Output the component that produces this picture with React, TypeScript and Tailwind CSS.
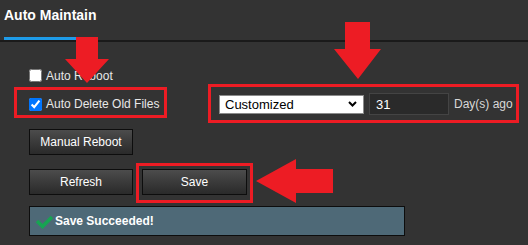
import React from "react";

function Btn({ children, className = "" }: { children: React.ReactNode; className?: string }) {
  return (
    <div
      className={
        "h-[26px] flex items-center justify-center border border-[#0d0d0d] bg-gradient-to-b from-[#4c4c4c] to-[#2a2a2a] text-white text-[12px] leading-none " +
        className
      }
    >
      {children}
    </div>
  );
}

export default function App() {
  return (
    <div className="relative w-[528px] h-[245px] overflow-hidden bg-[#333333] font-['Liberation_Sans',Arial,sans-serif]">
      {/* header */}
      <div className="h-[42px] border-b-2 border-[#1a1a1a] pl-[4px]">
        <div className="inline-flex flex-col pt-[7px]">
          <span className="text-[14px] leading-[16px] font-bold text-white">Auto Maintain</span>
          <div className="mt-[14px] h-[3px] bg-[#1e9be8]" />
        </div>
      </div>

      {/* content */}
      <div className="pl-[29px] pt-[27px] flex flex-col">
        <label className="flex items-center h-[13px] gap-[4px] text-[12px] leading-[14px] text-[#e8e8e8]">
          <input type="checkbox" className="m-0 w-[13px] h-[13px]" readOnly />
          <span>Auto Reboot</span>
        </label>

        <div className="mt-[11px] flex items-center h-[22px]">
          <label className="w-[190px] flex items-center gap-[4px] text-[12px] leading-[14px] text-[#e8e8e8]">
            <input type="checkbox" className="m-0 w-[13px] h-[13px]" checked readOnly />
            <span>Auto Delete Old Files</span>
          </label>
          <div className="flex items-center">
            <div className="w-[145px] h-[19px] bg-white border border-[#8a8a8a] flex items-center justify-between pl-[5px] pr-[6px] text-[13px] text-black leading-none">
              <span>Customized</span>
              <svg width="9" height="6" viewBox="0 0 9 6">
                <path d="M1 1 L4.5 4.5 L8 1" fill="none" stroke="#000" strokeWidth="2" />
              </svg>
            </div>
            <div className="ml-[5px] w-[80px] h-[22px] bg-[#2a2a2a] border border-[#444444] flex items-center pl-[6px] text-[13px] text-white leading-none">
              31
            </div>
            <span className="ml-[5px] text-[12px] text-[#d8d8d8] leading-none">Day(s) ago</span>
          </div>
        </div>

        <Btn className="mt-[14px] w-[104px]">Manual Reboot</Btn>

        <div className="mt-[14px] flex gap-[9px]">
          <Btn className="w-[104px]">Refresh</Btn>
          <Btn className="w-[105px]">Save</Btn>
        </div>

        <div className="mt-[11px] w-[376px] h-[30px] bg-[#4e6977] border border-[#0d0d0d] flex items-center pl-[6px] gap-[2px]">
          <svg className="mt-[1px]" width="17" height="14" viewBox="0 0 17 14">
            <path d="M1 6 L6.5 11.5 L16 2" fill="none" stroke="#17a452" strokeWidth="3.6" />
          </svg>
          <span className="text-[12px] font-bold text-white leading-none">Save Succeeded!</span>
        </div>
      </div>

      {/* annotation overlay */}
      <svg className="absolute inset-0 pointer-events-none" width="528" height="245" viewBox="0 0 528 245">
        <rect x="15.5" y="88.5" width="150" height="28" fill="none" stroke="#ed1c24" strokeWidth="3" />
        <rect x="209.5" y="85.5" width="308" height="36" fill="none" stroke="#ed1c24" strokeWidth="3" />
        <rect x="137.5" y="164.5" width="114" height="37" fill="none" stroke="#ed1c24" strokeWidth="3" />
        <polygon points="76,37 98,37 98,59 109,59 87,83 65,59 76,59" fill="#ed1c24" />
        <polygon points="345,22 370,22 370,49 381,49 358,79 334,49 345,49" fill="#ed1c24" />
        <polygon points="256,181 296,159 296,169 333,169 333,193 296,193 296,203" fill="#ed1c24" />
      </svg>
    </div>
  );
}
